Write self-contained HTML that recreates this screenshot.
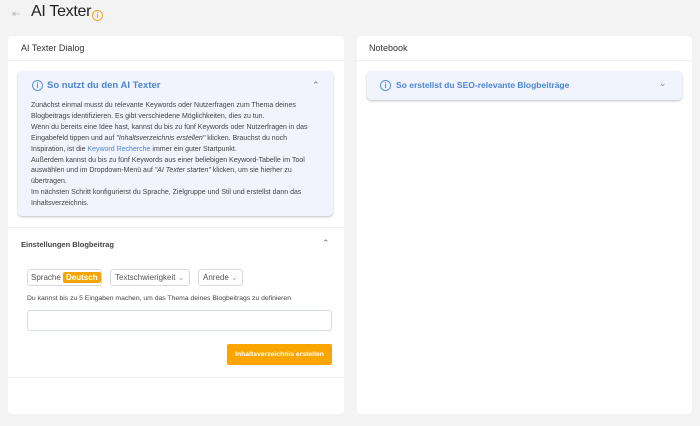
<!DOCTYPE html>
<html><head><meta charset="utf-8"><style>
*{box-sizing:border-box;margin:0;padding:0}
body{width:700px;height:426px;background:#f3f3f3;font-family:"Liberation Sans",sans-serif;color:#333;position:relative;overflow:hidden}
.abs{position:absolute;white-space:nowrap}
.card{background:#fff;border-radius:4px}
.hdr{font-size:9px;color:#333}
.box{background:#f1f3fd;border-radius:4px;box-shadow:0 1px 2px rgba(0,0,0,.25)}
.blue{color:#4a86d6}
.info{width:11px;height:11px;border:1.2px solid #5b93dc;border-radius:50%;font-size:8px;line-height:9px;text-align:center;color:#5b93dc;font-weight:bold}
.p{font-size:7px;line-height:10.9px;color:#444}
.chip{border:1px solid #d6d9e3;border-radius:3px;font-size:8px;color:#555;height:17px;line-height:15px;padding:0 4px}
</style></head><body>
<div class="abs" style="left:12px;top:9px;font-size:10px;color:#bbb">⇤</div>
<div class="abs" style="left:31px;top:3px;font-size:16px;color:#222;letter-spacing:-0.3px">AI Texter</div>
<div class="abs info" style="left:92px;top:10px;border-color:#f5a623;color:#f5a623">i</div>

<div class="abs card" style="left:8px;top:36px;width:336px;height:378px"></div>
<div class="abs hdr" style="left:21px;top:43px">AI Texter Dialog</div>
<div class="abs" style="left:8px;top:60px;width:336px;height:1px;background:#eee"></div>
<div class="abs box" style="left:18px;top:71px;width:315px;height:145px"></div>
<div class="abs info" style="left:32px;top:80px">i</div>
<div class="abs blue" style="left:47px;top:80px;font-size:9.5px;font-weight:bold">So nutzt du den AI Texter</div>
<div class="abs" style="left:312px;top:80px;font-size:9px;color:#777">⌃</div>
<div class="abs p" style="left:31px;top:101px;width:295px">Zunächst einmal musst du relevante Keywords oder Nutzerfragen zum Thema deines<br>Blogbeitrags identifizieren. Es gibt verschiedene Möglichkeiten, dies zu tun.<br>Wenn du bereits eine Idee hast, kannst du bis zu fünf Keywords oder Nutzerfragen in das<br>Eingabefeld tippen und auf <i>"Inhaltsverzeichnis erstellen"</i> klicken. Brauchst du noch<br>Inspiration, ist die <span class="blue">Keyword Recherche</span> immer ein guter Startpunkt.<br>Außerdem kannst du bis zu fünf Keywords aus einer beliebigen Keyword-Tabelle im Tool<br>auswählen und im Dropdown-Menü auf <i>"AI Texter starten"</i> klicken, um sie hierher zu<br>übertragen.<br>Im nächsten Schritt konfigurierst du Sprache, Zielgruppe und Stil und erstellst dann das<br>Inhaltsverzeichnis.</div>
<div class="abs" style="left:8px;top:227px;width:336px;height:1px;background:#eee"></div>
<div class="abs" style="left:21px;top:240px;font-size:7.5px;font-weight:bold;color:#444">Einstellungen Blogbeitrag</div>
<div class="abs" style="left:322px;top:238px;font-size:9px;color:#777">⌃</div>
<div class="abs chip" style="left:27px;top:269px;width:75px;padding:0 3px">Sprache <span style="background:#f8a400;color:#fff;font-weight:bold;padding:1px 3px;border-radius:2px">Deutsch</span></div>
<div class="abs chip" style="left:110px;top:269px;width:80px">Textschwierigkeit <span style="color:#aaa">⌄</span></div>
<div class="abs chip" style="left:198px;top:269px;width:45px">Anrede <span style="color:#aaa">⌄</span></div>
<div class="abs" style="left:27px;top:295px;font-size:6.8px;color:#444">Du kannst bis zu 5 Eingaben machen, um das Thema deines Blogbeitrags zu definieren</div>
<div class="abs" style="left:27px;top:310px;width:305px;height:21px;border:1px solid #d6dbe8;border-radius:3px"></div>
<div class="abs" style="left:227px;top:344px;width:105px;height:21px;background:#fba600;border-radius:2px;color:#fff;font-size:6.8px;font-weight:bold;text-align:center;line-height:21px">Inhaltsverzeichnis erstellen</div>
<div class="abs" style="left:8px;top:377px;width:336px;height:1px;background:#eee"></div>

<div class="abs card" style="left:357px;top:36px;width:335px;height:378px"></div>
<div class="abs hdr" style="left:369px;top:43px">Notebook</div>
<div class="abs" style="left:357px;top:60px;width:335px;height:1px;background:#eee"></div>
<div class="abs box" style="left:367px;top:71px;width:315px;height:29px"></div>
<div class="abs info" style="left:380px;top:80px">i</div>
<div class="abs blue" style="left:396px;top:80px;font-size:8.5px;font-weight:bold">So erstellst du SEO-relevante Blogbeiträge</div>
<div class="abs" style="left:659px;top:78px;font-size:9px;color:#888">⌄</div>
</body></html>
